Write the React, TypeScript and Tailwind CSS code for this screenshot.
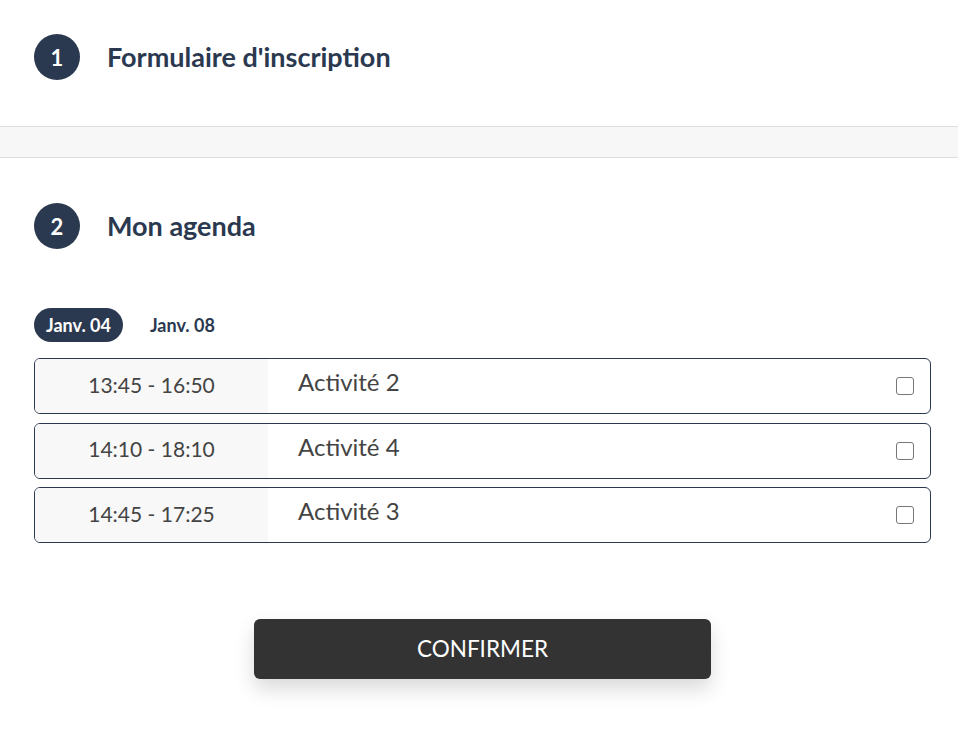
import { useState } from "react"

const days = ["Janv. 04", "Janv. 08"]

const slots = [
  { time: "13:45 - 16:50", label: "Activité 2" },
  { time: "14:10 - 18:10", label: "Activité 4" },
  { time: "14:45 - 17:25", label: "Activité 3" },
]

function StepTitle({ n, title }: { n: number; title: string }) {
  return (
    <div className="flex items-center">
      <div className="flex h-[46px] w-[46px] items-center justify-center rounded-full bg-[#2b3950] text-[22px] font-bold text-white">
        {n}
      </div>
      <h2 className="ml-[27px] text-[27px] font-bold text-[#2b3950]">{title}</h2>
    </div>
  )
}

export default function App() {
  const [day, setDay] = useState(0)
  const [checked, setChecked] = useState<boolean[]>([false, false, false])

  return (
    <div className="min-h-[739px] bg-white font-['Lato','Noto_Sans',sans-serif] text-[#333]">
      <section className="pl-[34px] pr-[27px] pt-[34px] pb-[46px]">
        <StepTitle n={1} title="Formulaire d'inscription" />
      </section>

      <div className="h-[32px] border-y border-[#dedede] bg-[#f7f7f7]" />

      <section className="pl-[34px] pr-[27px] pt-[45px]">
        <StepTitle n={2} title="Mon agenda" />

        <div className="mt-[59px] flex items-center gap-[15px]">
          {days.map((d, i) => (
            <button
              key={d}
              onClick={() => setDay(i)}
              className={
                i === day
                  ? "h-[34px] rounded-full bg-[#2b3950] px-[12px] text-[18px] font-bold text-white"
                  : "h-[34px] rounded-full px-[12px] text-[18px] font-bold text-[#2b3950]"
              }
            >
              {d}
            </button>
          ))}
        </div>

        <div className="mt-[16px] flex flex-col gap-[8.5px]">
          {slots.map((s, i) => (
            <label
              key={s.label}
              className="flex h-[56px] cursor-pointer overflow-hidden rounded-[6px] border border-[#2b3950]"
            >
              <div className="flex w-[233px] items-center justify-center bg-[#f8f8f9] pb-[3px] text-[21px] text-[#444]">
                {s.time}
              </div>
              <div className="flex flex-1 items-start pl-[30px] pt-[5px] text-[24px] text-[#444]">
                {s.label}
              </div>
              <div className="flex items-center pr-[16px]">
                <input
                  type="checkbox"
                  checked={checked[i]}
                  onChange={() => setChecked(checked.map((c, j) => (j === i ? !c : c)))}
                  className="h-[18px] w-[18px] appearance-none rounded-[3px] border border-[#777] bg-white checked:bg-[#2b3950]"
                />
              </div>
            </label>
          ))}
        </div>

        <div className="mt-[76px] flex justify-center">
          <button className="h-[60px] w-[457px] rounded-[6px] bg-[#333] text-[22.5px] text-white shadow-[0_10px_20px_rgba(0,0,0,0.15)]">
            CONFIRMER
          </button>
        </div>
      </section>
    </div>
  )
}
